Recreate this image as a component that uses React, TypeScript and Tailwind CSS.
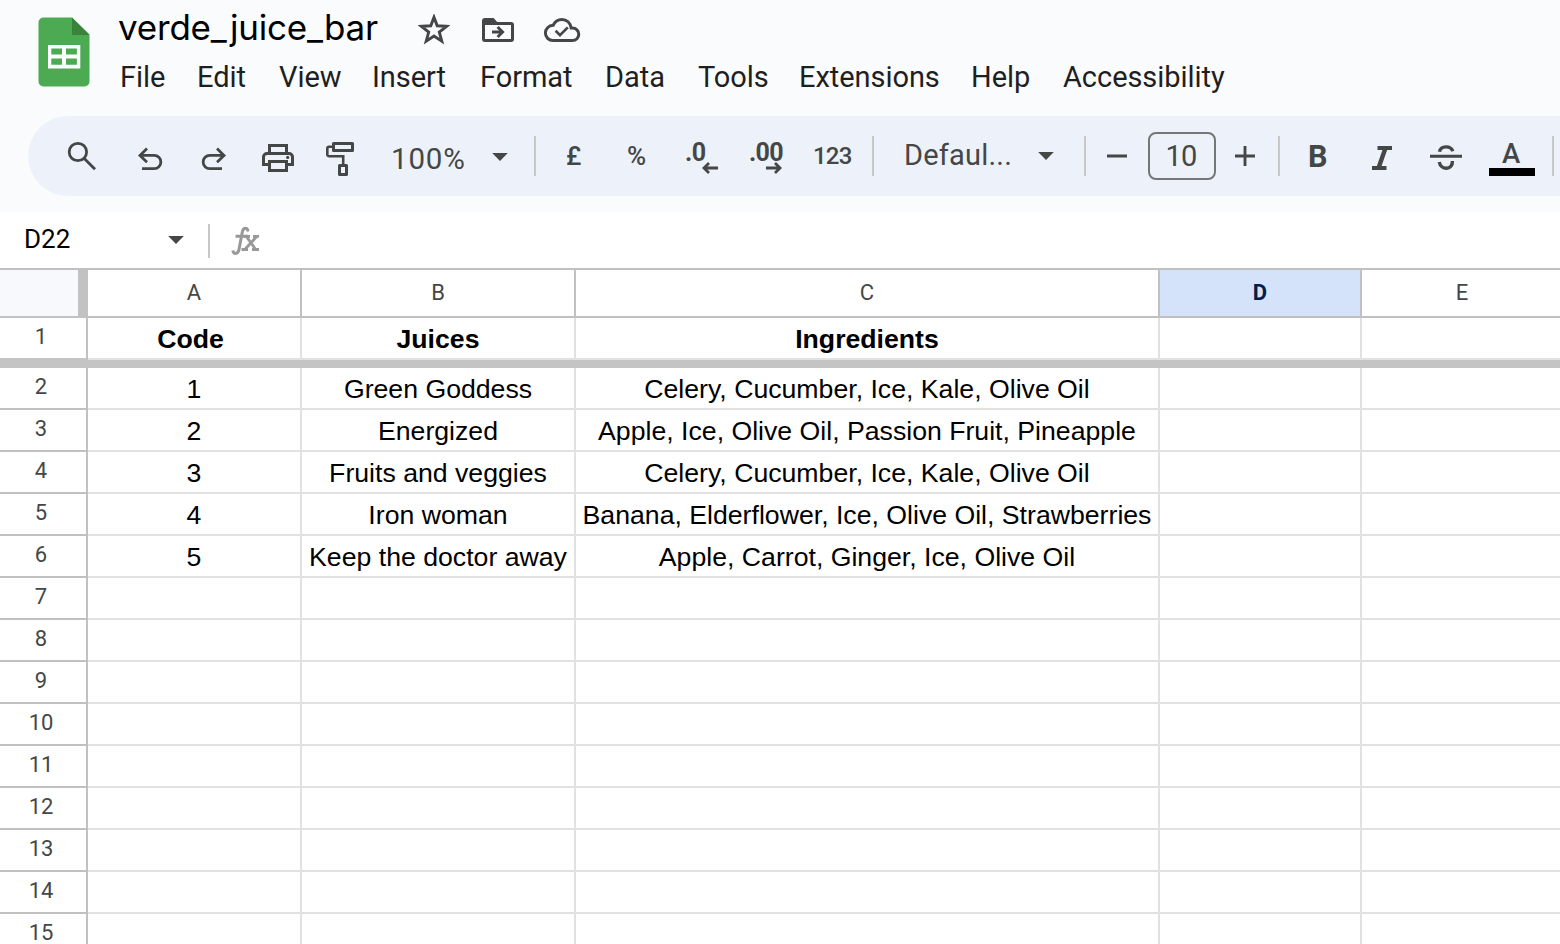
import type { ReactNode } from "react";

const menus = [
  { label: "File", cls: "w-[77px]" },
  { label: "Edit", cls: "w-[82px]" },
  { label: "View", cls: "w-[93px]" },
  { label: "Insert", cls: "w-[108px]" },
  { label: "Format", cls: "w-[125px]" },
  { label: "Data", cls: "w-[93px]" },
  { label: "Tools", cls: "w-[101px]" },
  { label: "Extensions", cls: "w-[172px]" },
  { label: "Help", cls: "w-[92px]" },
  { label: "Accessibility", cls: "w-[180px]" },
];

const header = ["Code", "Juices", "Ingredients", "", ""];
const juices = [
  ["1", "Green Goddess", "Celery, Cucumber, Ice, Kale, Olive Oil", "", ""],
  ["2", "Energized", "Apple, Ice, Olive Oil, Passion Fruit, Pineapple", "", ""],
  ["3", "Fruits and veggies", "Celery, Cucumber, Ice, Kale, Olive Oil", "", ""],
  ["4", "Iron woman", "Banana, Elderflower, Ice, Olive Oil, Strawberries", "", ""],
  ["5", "Keep the doctor away", "Apple, Carrot, Ginger, Ice, Olive Oil", "", ""],
];
const rows = Array.from({ length: 14 }, (_, i) => juices[i] ?? ["", "", "", "", ""]);
const grid = "grid grid-cols-[88px_214px_274px_584px_202px_202px]";

function Divider({ className = "" }: { className?: string }) {
  return <div className={`w-0.5 shrink-0 bg-[#c7c7c7] ${className}`} />;
}

function Caret({ className = "" }: { className?: string }) {
  return (
    <svg className={`h-2 w-4 shrink-0 ${className}`} viewBox="0 0 16 8">
      <path d="M0.2 0H15.8L8 8Z" fill="#444746" />
    </svg>
  );
}

function Tool({ className, children }: { className: string; children: ReactNode }) {
  return <div className={`flex h-20 shrink-0 items-center ${className}`}>{children}</div>;
}

function Title() {
  return (
    <header className="flex h-[116px] pl-[38px]">
      <svg className="mt-[17px] h-[70px] w-[52px] shrink-0" viewBox="0 0 52 70">
        <path d="M5 .5H34L51.5 17.500V64.500a5 5 0 0 1-5 5H5.500a5 5 0 0 1-5-5V5.500a5 5 0 0 1 5-5Z" fill="#4caa53" />
        <path d="M34 .5L51.5 17.900H34Z" fill="#3a8339" />
        <path d="M10 28H42.300V51.500H10ZM13.300 31.600V37.600H24V31.600ZM28 31.600V37.600H38.900V31.600ZM13.300 41.500V47.800H24V41.500ZM28 41.500V47.800H38.900V41.500Z" fill="#fff" fillRule="evenodd" />
      </svg>
      <div className="pl-7">
        <div className="flex h-14 items-start">
          <h1 className="w-[300px] pt-1 font-['Inter',sans-serif] text-[35px] leading-[46px] tracking-[-0.2px] text-black">verde_juice_bar</h1>
          <svg className="mt-[14px] h-8 w-8" viewBox="0 0 32 32">
            <path d="M16 3.200L19.200 11.800L28.600 12.300L21.300 18.100L23.800 27.200L16 22L8.200 27.200L10.700 18.100L3.400 12.300L12.800 11.800Z" fill="none" stroke="#444746" strokeWidth="2.900" />
          </svg>
          <svg className="mt-[16px] ml-[31px] h-7 w-[34px]" viewBox="0 0 34 28">
            <path d="M4 2H12.600L16.200 6H30A3 3 0 0 1 33 9V23A3 3 0 0 1 30 26H4A3 3 0 0 1 1 23V5A3 3 0 0 1 4 2ZM4 9V23H30V9Z" fill="#444746" fillRule="evenodd" />
            <path d="M11 16H21M16.600 11L21.600 16L16.600 21" fill="none" stroke="#444746" strokeWidth="2.900" />
          </svg>
          <svg className="mt-[16px] ml-7 h-7 w-[38px]" viewBox="0 0 38 28">
            <path d="M10 24.600H29.500A6.300 6.300 0 0 0 29.500 12H28.200C27.500 6.800 23.600 3.400 19 3.400C15 3.400 11.700 5.700 10.200 9.300C5.500 9.500 2.400 12.900 2.400 17A7.600 7.600 0 0 0 10 24.600Z" fill="none" stroke="#444746" strokeWidth="3" />
            <path d="M12.600 14.800L17 19.200L24.800 11.400" fill="none" stroke="#444746" strokeWidth="2.700" />
          </svg>
        </div>
        <nav className="flex pl-0.5 font-['Roboto',sans-serif] text-[29px] leading-[42px] tracking-[-0.050px] text-[#1f1f1f]">
          {menus.map((m) => (
            <span key={m.label} className={`shrink-0 ${m.cls}`}>{m.label}</span>
          ))}
        </nav>
      </div>
    </header>
  );
}

function Toolbar() {
  return (
    <div className="ml-7 flex h-20 items-center overflow-hidden rounded-l-full bg-[#edf2fa] font-['Roboto',sans-serif] text-[#444746]">
      <svg className="h-20 w-[332px] shrink-0" viewBox="28 116 332 80" fill="none" stroke="#444746" strokeWidth="2.800">
        <circle cx="77.900" cy="152" r="8.700" />
        <path d="M84 158.200L95 169.200" />
        <path d="M139.800 155.300H154.200a6.650 6.650 0 0 1 0 13.300H142M147 148.600L140 155.400L147 162.200" />
        <path d="M224.200 155.300H209.800a6.650 6.650 0 0 0 0 13.300H222M217 148.600L224 155.400L217 162.200" />
        <g strokeWidth="3">
          <path d="M269.500 153.500V145.500H286.500V153.500M269 164.500H263.500V157a3.500 3.500 0 0 1 3.500-3.500H289a3.500 3.500 0 0 1 3.500 3.500V164.500H287M269.500 161.500H286.500V170.500H269.500Z" />
          <rect x="333.500" y="143.500" width="19" height="7" strokeLinejoin="round" />
          <rect x="339.500" y="165.500" width="7" height="9" strokeLinejoin="round" />
        </g>
        <path d="M333 146.700H329a1.700 1.700 0 0 0-1.700 1.700V154.500a1.700 1.700 0 0 0 1.700 1.700H343.200V165" strokeWidth="2.600" />
        <circle cx="287.700" cy="157.400" r="1.600" fill="#444746" stroke="none" />
      </svg>
      <Tool className="w-[132px] pl-[31px] pt-1.5 text-[29.500px] tracking-[0.800px]">100%</Tool>
      <Caret className="mt-0.5" />
      <Divider className="ml-[26px] h-10" />
      <Tool className="w-[91px] pl-[30px] pt-px text-[26px] font-medium">£</Tool>
      <Tool className="w-[58px] pt-px text-[26px] font-medium">%</Tool>
      <div className="h-20 w-16 shrink-0 pt-[22px]">
        <div className="h-7 pt-px text-[25px] leading-7 font-bold tracking-[-0.400px]">.0</div>
        <svg className="-mt-1 ml-[17px] h-3 w-4" viewBox="0 0 16 12"><path d="M16 6H2M7 1L2 6L7 11" fill="none" stroke="#444746" strokeWidth="2.800" /></svg>
      </div>
      <div className="h-20 w-16 shrink-0 pt-[22px]">
        <div className="h-7 pt-px text-[25px] leading-7 font-bold tracking-[-0.700px]">.00</div>
        <svg className="-mt-1 ml-[17px] h-3 w-4" viewBox="0 0 16 12"><path d="M0 6H14M9 1L14 6L9 11" fill="none" stroke="#444746" strokeWidth="2.800" /></svg>
      </div>
      <Tool className="w-[59px] text-[24px] tracking-[-0.800px] font-medium">123</Tool>
      <Divider className="h-10" />
      <Tool className="w-[164px] pl-[30px] text-[29px] tracking-[0.200px]">Defaul...</Tool>
      <Caret />
      <Divider className="ml-[30px] h-10" />
      <svg className="ml-5 h-5 w-[22px] shrink-0" viewBox="0 0 22 20"><path d="M1 10H21" stroke="#444746" strokeWidth="2.900" /></svg>
      <div className="ml-5 flex h-12 w-[68px] shrink-0 items-center justify-center rounded-lg border-2 border-[#747775] pr-0.5 pt-px text-[29px] tracking-[-0.700px]">10</div>
      <svg className="ml-[18px] h-[22px] w-[22px] shrink-0" viewBox="0 0 22 22"><path d="M1 11H21M11 1V21" stroke="#444746" strokeWidth="2.900" /></svg>
      <Divider className="ml-[22px] h-10" />
      <Tool className="w-[90px] pl-7 pt-0.5 text-[30.500px] font-bold">B</Tool>
      <svg className="h-20 w-[98px] shrink-0" viewBox="1370 116 98 80" fill="none" stroke="#444746">
        <path d="M1377.500 148H1392M1372 168H1386.500" strokeWidth="4" />
        <path d="M1385.500 148L1378.500 168" strokeWidth="4.400" />
        <path d="M1430 156.300H1462" strokeWidth="3" />
        <path d="M1439.500 151.800C1440.500 145.300 1450.800 145.300 1452.800 151.200M1439.300 162C1440.500 170.500 1453 170.500 1452.400 161" strokeWidth="3.400" />
      </svg>
      <div className="ml-[21px] flex h-20 w-[46px] shrink-0 flex-col items-center pt-[21px]">
        <span className="h-[31px] pr-0.5 text-[27.500px] leading-[34px] font-medium">A</span>
        <span className="h-2 w-full bg-black" />
      </div>
      <Divider className="ml-[17px] h-10" />
    </div>
  );
}

function FormulaBar() {
  return (
    <div className="flex h-14 items-center bg-white font-['Roboto',sans-serif]">
      <div className="w-[168px] pb-0.5 pl-6 text-[26px] leading-[54px] text-black">D22</div>
      <Caret />
      <Divider className="mt-0.5 ml-6 h-[34px]" />
      <svg className="mt-px ml-5 h-8 w-8" viewBox="230 225 32 32" fill="none" stroke="#989898">
        <path d="M248 231.500C247.500 226.500 243 227.500 242.300 232L239 249.500C238 254.500 233.500 254.500 232.800 250.500M235.500 236.300H248" strokeWidth="3" />
        <path d="M244 236.300H250M253 236.300H259M241.500 249.500H248M252 249.500H259M246.500 236.800L255.500 249.200M256.500 236.800L245 249.200" strokeWidth="2.800" />
      </svg>
    </div>
  );
}

function RowHead({ n, frozen }: { n: number; frozen?: boolean }) {
  return (
    <div className={`h-full border-r-2 border-b-2 border-r-[#c0c0c0] pr-1 text-center font-['Roboto',sans-serif] text-[22px] leading-[38px] text-[#444746] ${frozen ? "border-b-[#c4c4c4]" : "border-b-[#c0c0c0]"}`}>{n}</div>
  );
}

function Cell({ text, className = "" }: { text: string; className?: string }) {
  return (
    <div className={`h-[42px] border-r-2 border-b-2 border-[#e1e1e1] text-center font-['Liberation_Sans',Arial,sans-serif] text-[26.667px] leading-[42px] whitespace-nowrap text-black ${className}`}>{text}</div>
  );
}

function Sheet() {
  return (
    <main className="h-[676px] w-[1564px] border-t-2 border-[#c0c0c0] bg-white">
      <div className={`${grid} h-12`}>
        <div className="border-r-[10px] border-b-2 border-[#c2c2c2] bg-[#f8f9fc]" />
        {["A", "B", "C", "D", "E"].map((c) => (
          <div key={c} className={`border-r-2 border-b-2 border-[#c0c0c0] text-center font-['Roboto',sans-serif] text-[22px] leading-[46px] ${c === "D" ? "bg-[#d5e3fa] font-bold text-[#041e49]" : "text-[#444746]"}`}>{c}</div>
        ))}
      </div>
      <div className={`${grid} h-[42px]`}>
        <RowHead n={1} frozen />
        {header.map((c, i) => (
          <Cell key={i} text={c} className={i === 0 ? "pr-[7px] font-bold" : "font-bold"} />
        ))}
      </div>
      <div className="h-2 bg-[#c4c4c4]" />
      {rows.map((r, ri) => (
        <div key={ri} className={`${grid} h-[42px]`}>
          <RowHead n={ri + 2} />
          {r.map((c, i) => (
            <Cell key={i} text={c} />
          ))}
        </div>
      ))}
    </main>
  );
}

export default function App() {
  return (
    <div className="h-[944px] w-[1560px] overflow-hidden bg-[#fafbfd]">
      <Title />
      <Toolbar />
      <div className="h-4" />
      <FormulaBar />
      <Sheet />
    </div>
  );
}
